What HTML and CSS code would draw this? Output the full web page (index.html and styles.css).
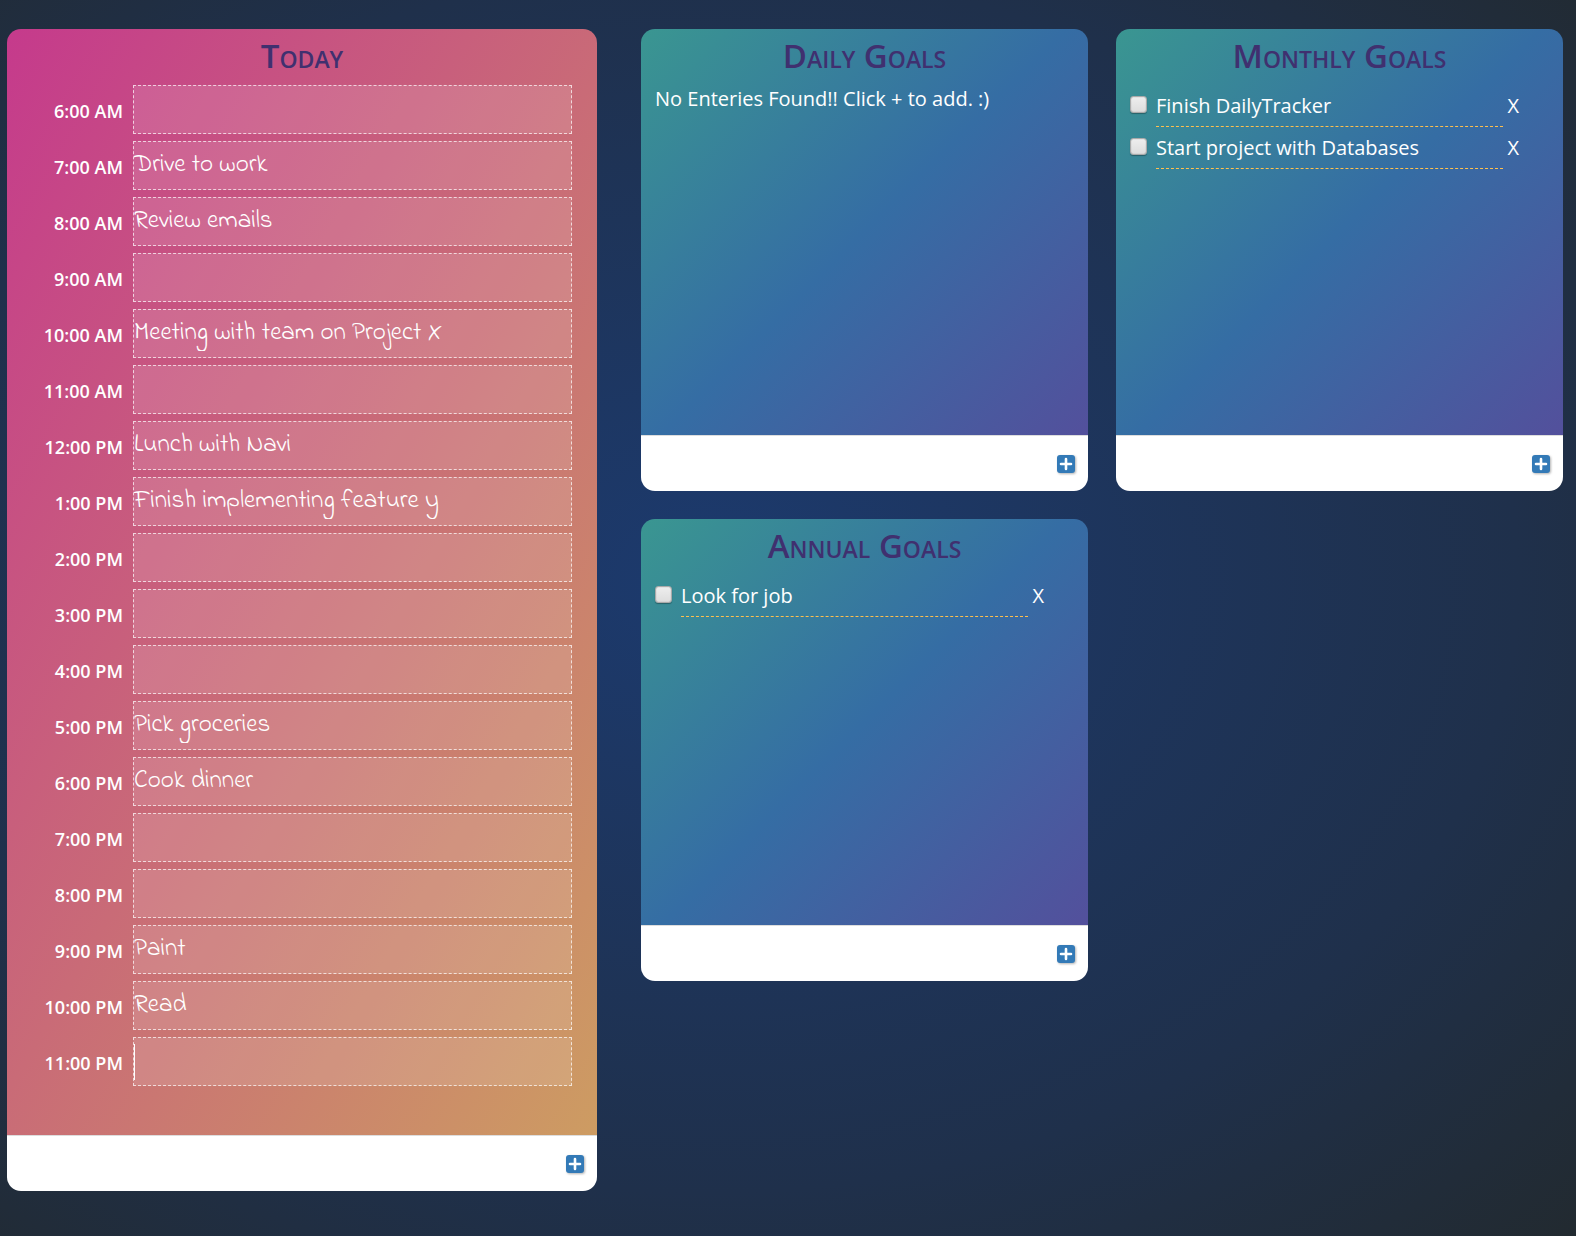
FILE: index.html
```html
<!DOCTYPE html>
<html lang="en">
<head>
<meta charset="utf-8">
<title>Daily Tracker</title>
<meta name="viewport" content="width=device-width, initial-scale=1">
<link rel="stylesheet" href="styles.css">
</head>
<body>
<svg class="defs" aria-hidden="true">
  <symbol id="plus" viewBox="0 0 18 18">
    <rect width="18" height="18" rx="3" fill="#337ab7"/>
    <path d="M9 4v10M4 9h10" stroke="#fff" stroke-width="2.6" stroke-linecap="round"/>
  </symbol>
</svg>
<main class="board">
  <section class="card today">
    <div class="card-body">
      <h1 class="title">Today</h1>
      <div class="hours">
        <label class="hour"><span class="time">6:00 AM</span><input class="entry" type="text"></label>
        <label class="hour"><span class="time">7:00 AM</span><input class="entry" type="text" value="Drive to work"></label>
        <label class="hour"><span class="time">8:00 AM</span><input class="entry" type="text" value="Review emails"></label>
        <label class="hour"><span class="time">9:00 AM</span><input class="entry" type="text"></label>
        <label class="hour"><span class="time">10:00 AM</span><input class="entry" type="text" value="Meeting with team on Project X"></label>
        <label class="hour"><span class="time">11:00 AM</span><input class="entry" type="text"></label>
        <label class="hour"><span class="time">12:00 PM</span><input class="entry" type="text" value="Lunch with Navi"></label>
        <label class="hour"><span class="time">1:00 PM</span><input class="entry" type="text" value="Finish implementing feature y"></label>
        <label class="hour"><span class="time">2:00 PM</span><input class="entry" type="text"></label>
        <label class="hour"><span class="time">3:00 PM</span><input class="entry" type="text"></label>
        <label class="hour"><span class="time">4:00 PM</span><input class="entry" type="text"></label>
        <label class="hour"><span class="time">5:00 PM</span><input class="entry" type="text" value="Pick groceries"></label>
        <label class="hour"><span class="time">6:00 PM</span><input class="entry" type="text" value="Cook dinner"></label>
        <label class="hour"><span class="time">7:00 PM</span><input class="entry" type="text"></label>
        <label class="hour"><span class="time">8:00 PM</span><input class="entry" type="text"></label>
        <label class="hour"><span class="time">9:00 PM</span><input class="entry" type="text" value="Paint"></label>
        <label class="hour"><span class="time">10:00 PM</span><input class="entry" type="text" value="Read"></label>
        <label class="hour active"><span class="time">11:00 PM</span><input class="entry" type="text"></label>
      </div>
    </div>
    <footer class="card-footer"><button class="add" type="button" aria-label="Add entry"><svg class="icon"><use href="#plus"/></svg></button></footer>
  </section>
  <div class="goals">
    <section class="card goal">
      <div class="card-body">
        <h2 class="title">Daily Goals</h2>
        <p class="empty">No Enteries Found!! Click + to add. :)</p>
      </div>
      <footer class="card-footer"><button class="add" type="button" aria-label="Add daily goal"><svg class="icon"><use href="#plus"/></svg></button></footer>
    </section>
    <section class="card goal">
      <div class="card-body">
        <h2 class="title">Monthly Goals</h2>
        <ul class="list">
          <li class="item"><input class="check" type="checkbox" id="m1"><label class="text" for="m1">Finish DailyTracker</label><button class="remove" type="button">X</button></li>
          <li class="item"><input class="check" type="checkbox" id="m2"><label class="text" for="m2">Start project with Databases</label><button class="remove" type="button">X</button></li>
        </ul>
      </div>
      <footer class="card-footer"><button class="add" type="button" aria-label="Add monthly goal"><svg class="icon"><use href="#plus"/></svg></button></footer>
    </section>
    <section class="card goal">
      <div class="card-body">
        <h2 class="title">Annual Goals</h2>
        <ul class="list">
          <li class="item"><input class="check" type="checkbox" id="a1"><label class="text" for="a1">Look for job</label><button class="remove" type="button">X</button></li>
        </ul>
      </div>
      <footer class="card-footer"><button class="add" type="button" aria-label="Add annual goal"><svg class="icon"><use href="#plus"/></svg></button></footer>
    </section>
  </div>
</main>
</body>
</html>
```
FILE: styles.css
```css
* { box-sizing: border-box; }

body {
  margin: 0;
  min-height: 100vh;
  font: 20px/28px "Open Sans", "Noto Sans", sans-serif;
  color: #fff;
  background: radial-gradient(ellipse at 45% 47%, #1c3a6e, #1f304b 66%, #222a30);
}

.defs { position: absolute; width: 0; height: 0; }

.board {
  display: grid;
  grid-template-columns: 590fr 922fr;
  gap: 44px;
  align-items: start;
  padding: 29px 13px 45px 7px;
}

.goals {
  display: grid;
  grid-template-columns: 1fr 1fr;
  gap: 28px;
}

.card {
  display: flex;
  flex-direction: column;
  border-radius: 14px;
  overflow: hidden;
}

.card-body { flex: 1; padding: 7px 14px 0; }
.today .card-body { padding: 7px 25px 49px; background: linear-gradient(120deg, #c53a8c, #cd9c62); }
.goal .card-body {
  min-height: 406px;
  background: linear-gradient(135deg, #3a9691, #356da4 50%, #53509c);
}

.title {
  margin: 0;
  font-size: 33px;
  line-height: 40px;
  font-weight: 600;
  font-variant: small-caps;
  text-align: center;
  color: #40306f;
}

.hours { display: grid; gap: 7px; margin-top: 9px; }

.hour {
  display: grid;
  grid-template-columns: 91px 1fr;
  gap: 10px;
  align-items: center;
  position: relative;
}

.time {
  padding-top: 2px;
  font-size: 18px;
  font-weight: 600;
  text-align: right;
  white-space: nowrap;
}

.entry {
  width: 100%;
  height: 49px;
  padding: 0 0 2px;
  border: 1px dashed rgba(255, 255, 255, .7);
  background: rgba(255, 255, 255, .13);
  color: #fff;
  font: 400 25px/44px "Indie Flower", Lato, sans-serif;
  font-kerning: none;
  outline: 0;
}

/* Text caret in the hour being edited */
.active::after {
  content: "";
  position: absolute;
  left: 102px;
  top: 7px;
  width: 1px;
  height: 36px;
  background: #fff;
}

.card-footer {
  display: flex;
  justify-content: flex-end;
  align-items: center;
  height: 56px;
  padding: 0 13px;
  border-top: 1px solid #ddd;
  background: #fff;
}

.add { padding: 0; border: 0; background: none; line-height: 0; cursor: pointer; }
.icon { width: 18px; height: 18px; filter: drop-shadow(1px 1px 1px rgba(0, 0, 0, .3)); }

.empty { margin: 9px 0 0; }

.list { margin: 9px 0 0; padding: 0; list-style: none; }

.item {
  display: grid;
  grid-template-columns: 17px 1fr 16px;
  column-gap: 9px;
  padding-right: 30px;
  height: 42px;
}

.check {
  appearance: none;
  width: 17px;
  height: 17px;
  margin: 11px 0 0;
  border: 1px solid #aaa;
  border-radius: 3px;
  background: linear-gradient(#eee, #ddd);
  box-shadow: 0 1px 1px rgba(0, 0, 0, .3), inset 0 0 1px #888;
}

.text { margin-right: -9px; padding-top: 7px; border-bottom: 1px dashed #ffc04d; }

.remove {
  margin: 7px 0 0;
  padding: 0;
  border: 0;
  background: none;
  color: #fff;
  font: inherit;
  height: 28px;
  text-align: right;
}
```
